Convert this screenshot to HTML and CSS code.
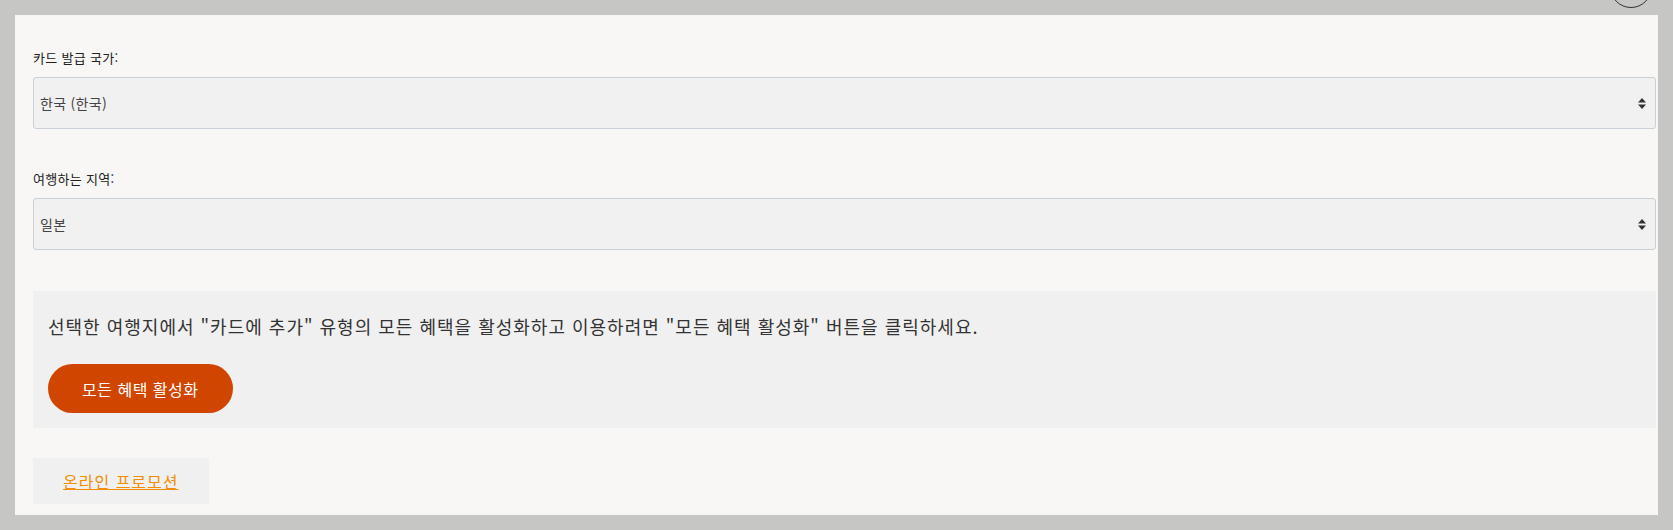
FILE: index.html
```html
<!DOCTYPE html>
<html lang="ko">
<head>
    <meta charset="UTF-8">
    <meta name="viewport" content="width=device-width, initial-scale=1.0">
    <title>여행 혜택</title>
    <link rel="stylesheet" href="styles.css">
</head>
<body>
    <div class="close-ring"></div>
    <div class="panel">
        <div class="field">
            <label for="country">카드 발급 국가:</label>
            <div class="select-wrap">
                <select id="country">
                    <option>한국 (한국)</option>
                </select>
                <svg class="select-arrow" width="8" height="11" viewBox="0 0 8 11"><path d="M4 0 L8 4.5 H0 Z M0 6.5 H8 L4 11 Z" fill="#333"/></svg>
            </div>
        </div>

        <div class="field second">
            <label for="region">여행하는 지역:</label>
            <div class="select-wrap">
                <select id="region">
                    <option>일본</option>
                </select>
                <svg class="select-arrow" width="8" height="11" viewBox="0 0 8 11"><path d="M4 0 L8 4.5 H0 Z M0 6.5 H8 L4 11 Z" fill="#333"/></svg>
            </div>
        </div>

        <div class="offer-box">
            <p>선택한 여행지에서 "카드에 추가" 유형의 모든 혜택을 활성화하고 이용하려면 "모든 혜택 활성화" 버튼을 클릭하세요.</p>
            <button class="activate">모든 혜택 활성화</button>
        </div>

        <div class="promo-link">
            <a href="#">온라인 프로모션</a>
        </div>
    </div>
</body>
</html>
```

FILE: styles.css
```css
body {
    margin: 0;
    padding: 15px;
    background-color: #c6c6c4;
    font-family: "Noto Sans CJK KR", "Noto Sans", sans-serif;
    color: #333;
}
.close-ring {
    position: absolute;
    top: -34px;
    left: 1610px;
    width: 40px;
    height: 40px;
    border: 1px solid #333;
    border-radius: 50%;
}
.panel {
    background-color: #f8f7f5;
    padding: 33px 2px 11px 18px;
}
.field label {
    display: block;
    font-size: 13px;
    line-height: 20px;
    letter-spacing: 0.3px;
    color: #222;
    margin-bottom: 9px;
}
.field.second {
    margin-top: 40px;
}
.select-wrap {
    position: relative;
}
select {
    appearance: none;
    -webkit-appearance: none;
    width: 100%;
    height: 52px;
    padding: 0 30px 0 6px;
    background-color: #f1f1f1;
    border: 1px solid #cbd0d6;
    border-radius: 3px;
    font-family: inherit;
    font-size: 14px;
    letter-spacing: 0.3px;
    color: #444;
}
.select-arrow {
    position: absolute;
    right: 10px;
    top: 21px;
}
.offer-box {
    margin-top: 41px;
    background-color: #f0f0f0;
    padding: 22px 15px 15px;
}
.offer-box p {
    margin: 0 0 25px;
    font-size: 18px;
    line-height: 26px;
    letter-spacing: 1px;
    color: #333;
}
.activate {
    height: 49px;
    padding: 0 34px;
    background-color: #d04600;
    color: #fff;
    border: none;
    border-radius: 25px;
    font-family: inherit;
    font-size: 16px;
    letter-spacing: 0.5px;
    cursor: pointer;
}
.promo-link {
    display: inline-block;
    margin-top: 30px;
    background-color: #f0f0f0;
    padding: 0 30px;
    line-height: 46px;
}
.promo-link a {
    color: #f28c00;
    font-size: 16px;
    letter-spacing: 1px;
}
```
